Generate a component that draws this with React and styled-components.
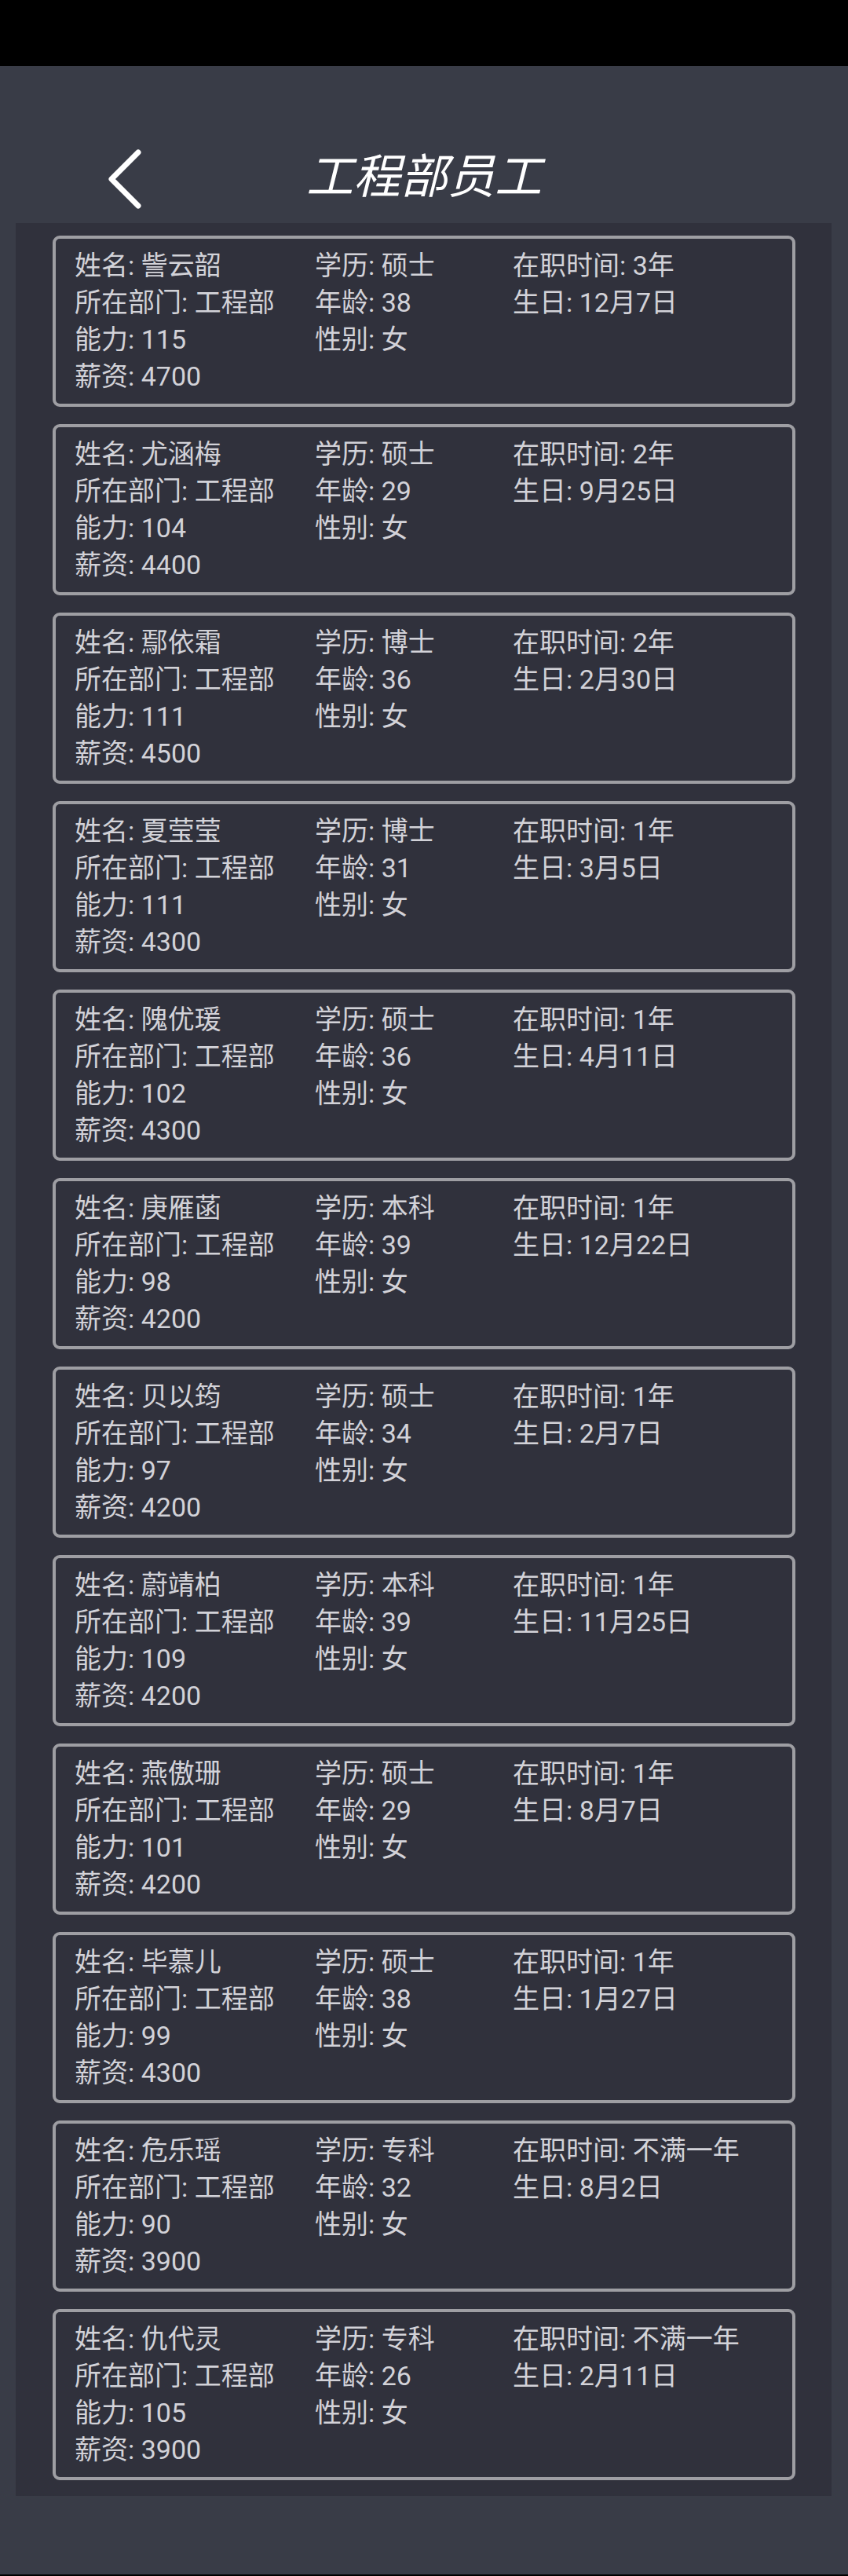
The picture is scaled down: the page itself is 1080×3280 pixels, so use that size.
import styled, { createGlobalStyle } from "styled-components";

const GlobalStyle = createGlobalStyle`
  * { box-sizing: border-box; }
  html, body { margin: 0; padding: 0; background: #393c47; }
  body { font-family: "Roboto", "Noto Sans CJK SC", sans-serif; }
`;

const employees = [
  { name: "訾云韶", edu: "硕士", years: "3年", age: 38, birthday: "12月7日", ability: 115, salary: 4700 },
  { name: "尤涵梅", edu: "硕士", years: "2年", age: 29, birthday: "9月25日", ability: 104, salary: 4400 },
  { name: "鄢依霜", edu: "博士", years: "2年", age: 36, birthday: "2月30日", ability: 111, salary: 4500 },
  { name: "夏莹莹", edu: "博士", years: "1年", age: 31, birthday: "3月5日", ability: 111, salary: 4300 },
  { name: "隗优瑗", edu: "硕士", years: "1年", age: 36, birthday: "4月11日", ability: 102, salary: 4300 },
  { name: "庚雁菡", edu: "本科", years: "1年", age: 39, birthday: "12月22日", ability: 98, salary: 4200 },
  { name: "贝以筠", edu: "硕士", years: "1年", age: 34, birthday: "2月7日", ability: 97, salary: 4200 },
  { name: "蔚靖柏", edu: "本科", years: "1年", age: 39, birthday: "11月25日", ability: 109, salary: 4200 },
  { name: "燕傲珊", edu: "硕士", years: "1年", age: 29, birthday: "8月7日", ability: 101, salary: 4200 },
  { name: "毕慕儿", edu: "硕士", years: "1年", age: 38, birthday: "1月27日", ability: 99, salary: 4300 },
  { name: "危乐瑶", edu: "专科", years: "不满一年", age: 32, birthday: "8月2日", ability: 90, salary: 3900 },
  { name: "仇代灵", edu: "专科", years: "不满一年", age: 26, birthday: "2月11日", ability: 105, salary: 3900 },
];

const App = () => {
  return (
    <Screen>
      <GlobalStyle />
      <StatusBar />
      <Header>
        <BackButton aria-label="返回">
          <svg width="46" height="84" viewBox="0 0 46 84">
            <polyline
              points="38,8 4,42 38,76"
              fill="none"
              stroke="#ffffff"
              strokeWidth="7"
              strokeLinecap="round"
              strokeLinejoin="round"
            />
          </svg>
        </BackButton>
        <Title>工程部员工</Title>
      </Header>
      <ListPanel>
        {employees.map((e) => (
          <Card key={e.name}>
            <Field>姓名: {e.name}</Field>
            <Field>学历: {e.edu}</Field>
            <Field>在职时间: {e.years}</Field>
            <Field>所在部门: 工程部</Field>
            <Field>年龄: {e.age}</Field>
            <Field>生日: {e.birthday}</Field>
            <Field>能力: {e.ability}</Field>
            <Field>性别: 女</Field>
            <Field />
            <Field>薪资: {e.salary}</Field>
          </Card>
        ))}
      </ListPanel>
      <Footer />
    </Screen>
  );
};

const Screen = styled.div`
  width: 1080px;
  min-height: 3280px;
  background: #393c47;
  display: flex;
  flex-direction: column;
`;

const StatusBar = styled.div`
  height: 84px;
  background: #000;
`;

const Header = styled.header`
  position: relative;
  height: 200px;
  padding-top: 106px;
  display: flex;
  align-items: flex-start;
  justify-content: center;
`;

const BackButton = styled.button`
  position: absolute;
  left: 138px;
  top: 102px;
  padding: 0;
  border: none;
  background: none;
  display: flex;
  svg { display: block; }
`;

const Title = styled.h1`
  margin: 0;
  color: #ffffff;
  font-family: "Noto Sans CJK SC", sans-serif;
  font-weight: 400;
  font-style: italic;
  font-size: 60px;
  line-height: 60px;
`;

const ListPanel = styled.main`
  margin: 0 21px 0 20px;
  padding: 16px 46px 20px 47px;
  background: #30313c;
  display: flex;
  flex-direction: column;
  gap: 22px;
`;

const Card = styled.section`
  height: 218px;
  border: 4px solid #9e9ea3;
  border-radius: 9px;
  padding: 11px 24px 10px;
  display: grid;
  grid-template-columns: 306px 252px 1fr;
  grid-auto-rows: 47px;
  align-content: start;
`;

const Field = styled.div`
  color: #d2d2d8;
  font-size: 34px;
  line-height: 47px;
  white-space: nowrap;
`;

const Footer = styled.div`
  flex: 1;
  border-bottom: 2px solid #000;
`;

export default App;
